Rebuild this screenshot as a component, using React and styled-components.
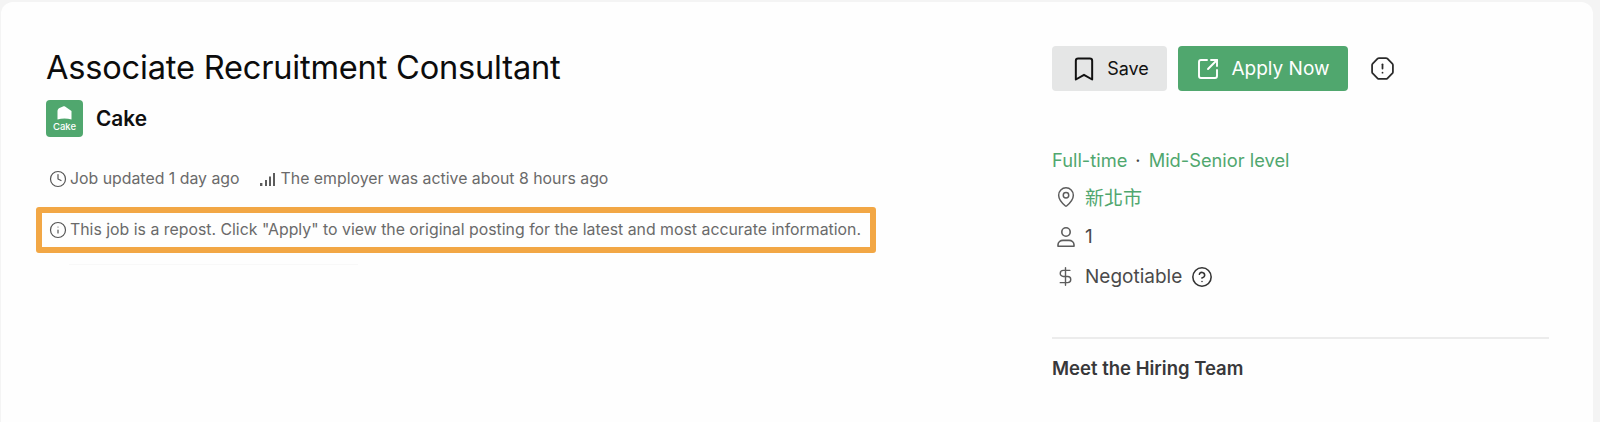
import React from "react";
import styled, { createGlobalStyle } from "styled-components";
import {
  Bookmark,
  CircleHelp,
  Clock,
  DollarSign,
  Info,
  MapPin,
  OctagonAlert,
  SquareArrowOutUpRight,
} from "lucide-react";

const GlobalStyle = createGlobalStyle`
  html, body {
    margin: 0;
    padding: 0;
    height: 422px;
    overflow: hidden;
    background: #f4f4f4;
  }
  body {
    font-family: "Inter", "Noto Sans CJK TC", sans-serif;
    -webkit-font-smoothing: antialiased;
  }
`;

const Page = styled.div`
  height: 422px;
  padding: 2px 7px 0 1px;
  box-sizing: border-box;
`;

const Card = styled.main`
  height: 420px;
  display: flex;
  background: #fefefe;
  border-radius: 12px 12px 0 0;
  padding: 44px 44px 0 45px;
  box-sizing: border-box;
`;

const LeftColumn = styled.section`
  width: 1006px;
  flex: none;
`;

const RightColumn = styled.aside`
  flex: 1;
`;

const Title = styled.h1`
  margin: 0;
  height: 42px;
  font-size: 32.6px;
  line-height: 42px;
  font-weight: 400;
  color: #0c0c0c;
  letter-spacing: -0.2px;
`;

const CompanyRow = styled.div`
  display: flex;
  align-items: center;
  gap: 13px;
  margin-top: 12px;
`;

const Logo = styled.div`
  width: 37px;
  height: 37px;
  border-radius: 4px;
  background: #50a76e;
  display: flex;
  flex-direction: column;
  align-items: center;
  justify-content: center;
  gap: 2px;
  color: #ffffff;
`;

const LogoText = styled.span`
  font-size: 9.5px;
  line-height: 9px;
  font-weight: 500;
`;

const CompanyName = styled.span`
  font-size: 20.8px;
  font-weight: 600;
  color: #0f0f0f;
`;

const MetaRow = styled.div`
  display: flex;
  align-items: center;
  gap: 20px;
  margin: 32px 0 0 3px;
`;

const MetaItem = styled.span`
  display: inline-flex;
  align-items: center;
  gap: ${(p) => (p.$wide ? 5 : 3)}px;
  font-size: 15.85px;
  line-height: 20px;
  white-space: nowrap;
  color: #6a6a6a;
  svg {
    flex: none;
    color: #555555;
  }
`;

const Highlight = styled.div`
  width: 840px;
  height: 46px;
  margin: 18px 0 0 -10px;
  border: 6px solid #f2a745;
  border-radius: 3px;
  box-sizing: border-box;
  display: flex;
  align-items: center;
  padding-left: 7px;
`;

const FaintLine = styled.div`
  width: 289px;
  height: 1px;
  margin: 11px 0 0 23px;
  background: #f8f8f8;
`;

const Actions = styled.div`
  display: flex;
  align-items: center;
`;

const ActionButton = styled.button`
  height: 45px;
  width: ${(p) => p.$width}px;
  margin-right: 11px;
  padding: 0;
  border: 0;
  border-radius: 4px;
  background: ${(p) => (p.$primary ? "#50a76e" : "#e5e6e6")};
  color: ${(p) => (p.$primary ? "#ffffff" : "#111111")};
  display: flex;
  align-items: center;
  justify-content: center;
  gap: ${(p) => (p.$primary ? 11 : 9)}px;
  font-family: inherit;
  font-size: ${(p) => (p.$primary ? 19 : 18)}px;
`;

const ReportIcon = styled(OctagonAlert)`
  margin-left: 11px;
  color: #2b2b2b;
`;

const JobType = styled.div`
  margin-top: 57px;
  font-size: 18.3px;
  line-height: 24px;
  color: #50a76e;
`;

const Dot = styled.span`
  margin: 0 8px;
  color: #444444;
`;

const DetailList = styled.div`
  display: flex;
  flex-direction: column;
  gap: 17px;
  margin-top: 13px;
`;

const DetailRow = styled.div`
  display: flex;
  align-items: center;
  height: 23px;
  gap: 6px;
  font-size: 19px;
  color: ${(p) => (p.$link ? "#50a76e" : "#4a4a4a")};
`;

const IconSlot = styled.span`
  width: 27px;
  flex: none;
  display: flex;
  justify-content: center;
  color: #5c5c5c;
`;

const HelpIcon = styled(CircleHelp)`
  margin-left: 3px;
  color: #333333;
`;

const Divider = styled.hr`
  margin: 49px 0 0;
  border: 0;
  height: 2px;
  background: #ececec;
`;

const TeamHeading = styled.h2`
  margin: 18px 0 0;
  font-size: 18.5px;
  line-height: 22px;
  font-weight: 600;
  color: #38383a;
`;

const CakeMark = () => (
  <svg width="15" height="14" viewBox="0 0 15 14" fill="#ffffff">
    <path d="M0.5 13.5V5C0.5 3.4 1.6 2.4 3 1.7L6 0.4C6.7 0.1 7.4 0.1 8 0.5L14.5 5V13.5C10 12.3 5 12.3 0.5 13.5z" />
  </svg>
);

const SignalIcon = () => (
  <svg width="16" height="14" viewBox="0 0 16 14" fill="#5c5c5c">
    <rect x="0" y="11" width="2.4" height="3" />
    <rect x="5" y="8" width="2" height="6" />
    <rect x="9" y="4.5" width="2" height="9.5" />
    <rect x="13" y="1" width="2" height="13" />
  </svg>
);

const PersonIcon = () => (
  <svg width="20" height="22" viewBox="0 0 20 22" fill="none" stroke="currentColor" strokeWidth="1.6">
    <circle cx="10" cy="6" r="4.2" />
    <path d="M2 20.2v-1.4c0-2.8 2.4-4.4 5-4.4h6c2.6 0 5 1.6 5 4.4v1.4z" strokeLinejoin="round" />
  </svg>
);

const App = () => {
  return (
    <>
      <GlobalStyle />
      <Page>
        <Card>
          <LeftColumn>
            <Title>Associate Recruitment Consultant</Title>
            <CompanyRow>
              <Logo>
                <CakeMark />
                <LogoText>Cake</LogoText>
              </Logo>
              <CompanyName>Cake</CompanyName>
            </CompanyRow>
            <MetaRow>
              <MetaItem>
                <Clock size={18} strokeWidth={1.6} />
                Job updated 1 day ago
              </MetaItem>
              <MetaItem $wide>
                <SignalIcon />
                The employer was active about 8 hours ago
              </MetaItem>
            </MetaRow>
            <Highlight>
              <MetaItem>
                <Info size={18} strokeWidth={1.6} />
                This job is a repost. Click "Apply" to view the original posting for the latest and most accurate information.
              </MetaItem>
            </Highlight>
            <FaintLine />
          </LeftColumn>
          <RightColumn>
            <Actions>
              <ActionButton $width={115}>
                <Bookmark size={28} strokeWidth={1.7} />
                Save
              </ActionButton>
              <ActionButton $primary $width={170}>
                <SquareArrowOutUpRight size={24} strokeWidth={1.9} />
                Apply Now
              </ActionButton>
              <ReportIcon size={25} strokeWidth={1.7} />
            </Actions>
            <JobType>
              Full-time
              <Dot>·</Dot>
              Mid-Senior level
            </JobType>
            <DetailList>
              <DetailRow $link>
                <IconSlot>
                  <MapPin size={22} strokeWidth={1.6} />
                </IconSlot>
                新北市
              </DetailRow>
              <DetailRow>
                <IconSlot>
                  <PersonIcon />
                </IconSlot>
                1
              </DetailRow>
              <DetailRow>
                <IconSlot>
                  <DollarSign size={21} strokeWidth={1.6} />
                </IconSlot>
                Negotiable
                <HelpIcon size={22} strokeWidth={1.7} />
              </DetailRow>
            </DetailList>
            <Divider />
            <TeamHeading>Meet the Hiring Team</TeamHeading>
          </RightColumn>
        </Card>
      </Page>
    </>
  );
};

export default App;
